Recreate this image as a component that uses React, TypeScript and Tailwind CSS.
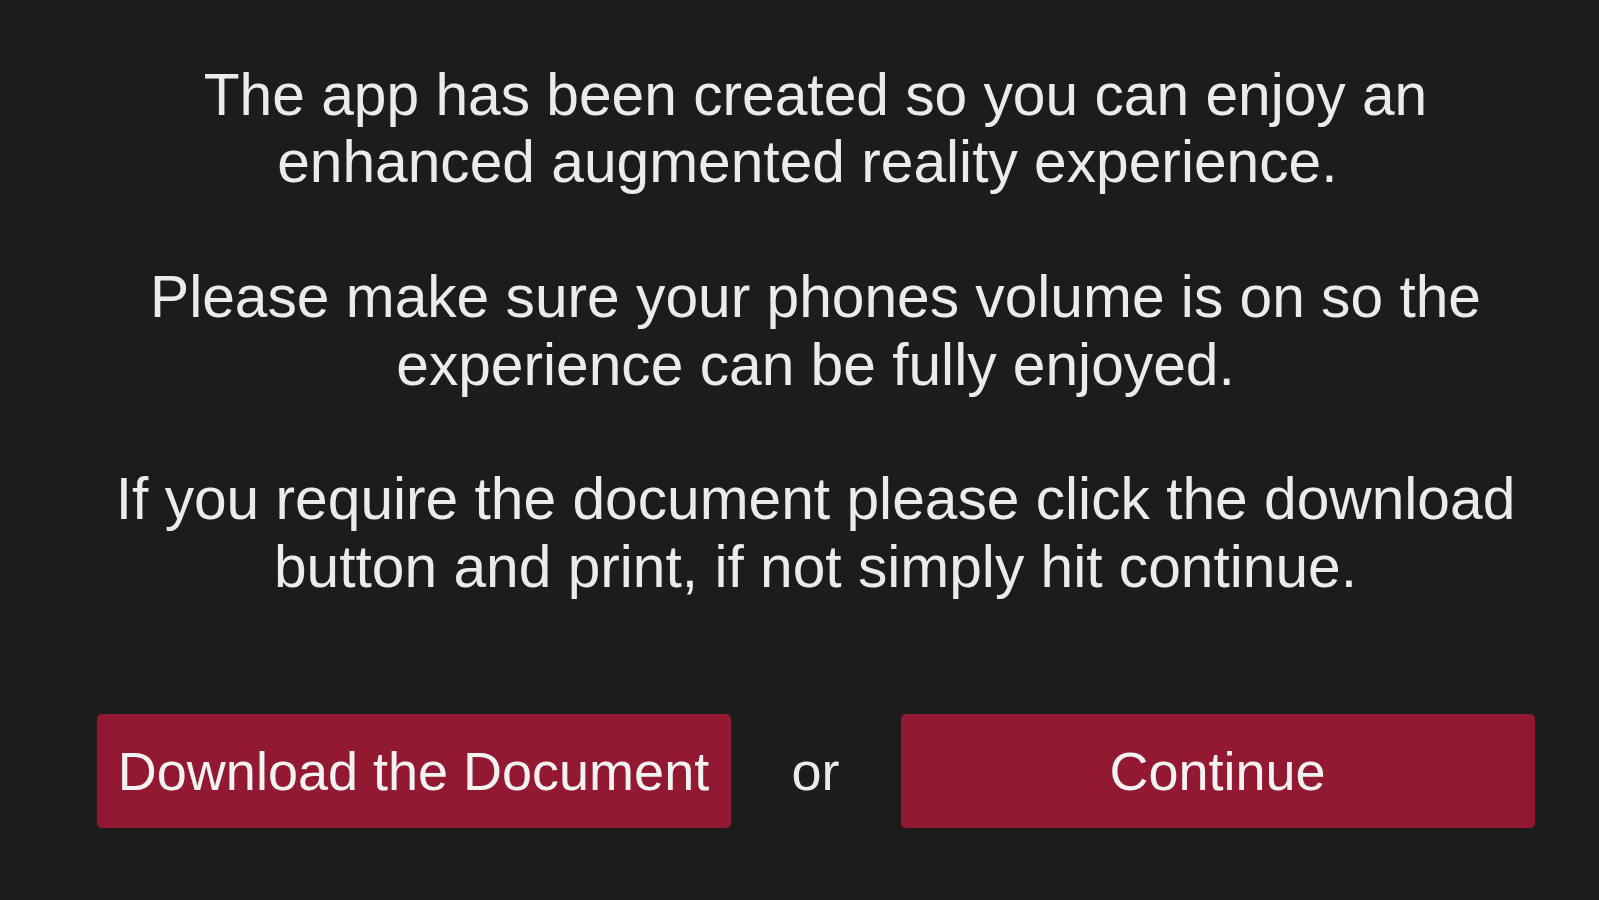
const paragraphs = [
  ["The app has been created so you can enjoy an", "enhanced augmented reality experience.\u00a0"],
  ["Please make sure your phones volume is on so the", "experience can be fully enjoyed."],
  ["If you require the document please click the download", "button and print, if not simply hit continue."],
];

const App = () => {
  return (
    <div className="w-full h-[900px] bg-[#1c1c1c] pl-[32px] pt-[61px] font-['Liberation_Sans',Arial,sans-serif] text-[#ebebeb]">
      <div className="flex flex-col items-center text-center text-[58.7px] leading-[67.4px]">
        {paragraphs.map((lines, i) => (
          <p key={i} className={i > 0 ? "mt-[67.4px]" : ""}>
            {lines[0]}
            <br />
            {lines[1]}
          </p>
        ))}
      </div>
      <div className="mt-[114px] flex items-center justify-center text-[54px]">
        <button className="w-[634px] h-[114px] rounded-[5px] bg-[#931933] text-[#f2f2f2] leading-none">
          Download the Document
        </button>
        <span className="w-[170px] text-center leading-none">or</span>
        <button className="w-[634px] h-[114px] rounded-[5px] bg-[#931933] text-[#f2f2f2] leading-none">
          Continue
        </button>
      </div>
    </div>
  );
};

export default App;
